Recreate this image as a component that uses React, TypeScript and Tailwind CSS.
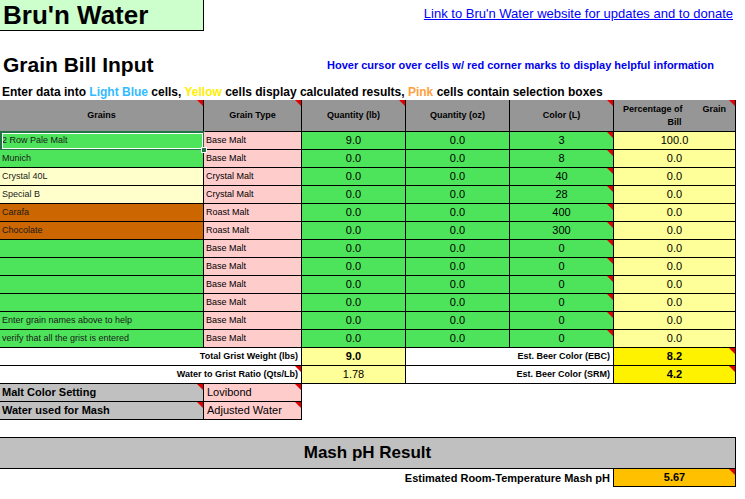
import React from 'react'

const GREEN = 'bg-[#4de35a]'
const PINK = 'bg-[#ffcccc]'
const LYEL = 'bg-[#ffffcc]'
const BROWN = 'bg-[#cc6600]'
const YCOL = 'bg-[#ffff99]'

type Row = { name: string; type: string; lb: string; color: string; pct: string; bg: string }

const rows: Row[] = [
  { name: '2 Row Pale Malt', type: 'Base Malt', lb: '9.0', color: '3', pct: '100.0', bg: GREEN },
  { name: 'Munich', type: 'Base Malt', lb: '0.0', color: '8', pct: '0.0', bg: GREEN },
  { name: 'Crystal 40L', type: 'Crystal Malt', lb: '0.0', color: '40', pct: '0.0', bg: LYEL },
  { name: 'Special B', type: 'Crystal Malt', lb: '0.0', color: '28', pct: '0.0', bg: LYEL },
  { name: 'Carafa', type: 'Roast Malt', lb: '0.0', color: '400', pct: '0.0', bg: BROWN },
  { name: 'Chocolate', type: 'Roast Malt', lb: '0.0', color: '300', pct: '0.0', bg: BROWN },
  { name: '', type: 'Base Malt', lb: '0.0', color: '0', pct: '0.0', bg: GREEN },
  { name: '', type: 'Base Malt', lb: '0.0', color: '0', pct: '0.0', bg: GREEN },
  { name: '', type: 'Base Malt', lb: '0.0', color: '0', pct: '0.0', bg: GREEN },
  { name: '', type: 'Base Malt', lb: '0.0', color: '0', pct: '0.0', bg: GREEN },
  { name: 'Enter grain names above to help', type: 'Base Malt', lb: '0.0', color: '0', pct: '0.0', bg: GREEN },
  { name: 'verify that all the grist is entered', type: 'Base Malt', lb: '0.0', color: '0', pct: '0.0', bg: GREEN },
]

function Mark() {
  return <span className="absolute top-0 right-0 w-0 h-0 border-t-[6px] border-l-[6px] border-t-[#e00000] border-l-transparent" />
}

function Cell({ className = '', mark, children }: { className?: string; mark?: boolean; children?: React.ReactNode }) {
  return (
    <div className={`relative h-full border-r border-b border-black flex items-center shrink-0 ${className}`}>
      {children}
      {mark && <Mark />}
    </div>
  )
}

export default function App() {
  return (
    <div className="w-[745px] h-[499px] bg-white text-black overflow-hidden" style={{ fontFamily: '"Liberation Sans", Arial, sans-serif' }}>
      {/* title bar */}
      <div className="flex h-[31px]">
        <div className="w-[204px] h-[31px] bg-[#ccffcc] border-r border-b border-black flex items-center pl-[3px]">
          <span className="text-[26px] font-bold leading-none">Bru'n Water</span>
        </div>
        <div className="flex-1 flex justify-end pr-[12px] pt-[6px]">
          <a href="#" className="text-[13px] leading-[16px] text-[#0000ff] underline">Link to Bru'n Water website for updates and to donate</a>
        </div>
      </div>

      <div className="h-[22px]" />
      <div className="flex items-center h-[24px]">
        <h1 className="w-[327px] pl-[3px] text-[21px] font-bold leading-[24px]">Grain Bill Input</h1>
        <span className="text-[11px] font-bold text-[#0000ee] leading-[14px]">Hover cursor over cells w/ red corner marks to display helpful information</span>
      </div>
      <div className="h-[23px] flex items-end">
        <p className="pl-[2px] text-[12px] font-bold leading-[16px] whitespace-nowrap">
          Enter data into <span className="text-[#33bbff]">Light Blue</span> cells, <span className="text-[#ffee00]">Yellow</span> cells display calculated results, <span className="text-[#ffa040]">Pink</span> cells contain selection boxes
        </p>
      </div>

      {/* header */}
      <div className="flex h-[32px] text-[9px] font-bold bg-[#969696] w-[736px]">
        <Cell className="w-[204px] justify-center" mark>Grains</Cell>
        <Cell className="w-[98px] justify-center" mark>Grain Type</Cell>
        <Cell className="w-[104px] justify-center" mark>Quantity (lb)</Cell>
        <Cell className="w-[104px] justify-center">Quantity (oz)</Cell>
        <Cell className="w-[104px] justify-center" mark>Color (L)</Cell>
        <Cell className="w-[122px] flex-col !items-stretch justify-center leading-[13px]" mark>
          <div className="flex justify-between pl-[9px] pr-[9px]"><span>Percentage of</span><span>Grain</span></div>
          <div className="text-center">Bill</div>
        </Cell>
      </div>

      {rows.map((r, i) => (
        <div key={i} className="flex h-[18px] text-[9px]">
          <Cell className={`w-[204px] pl-[2px] ${r.bg}`}>
            <span className="text-[#1a1a1a]">{r.name}</span>
            {i === 0 && (
              <>
                <span className="absolute left-0 -top-[1px] right-[-2px] bottom-[-2px] border-2 border-[#217346] shadow-[inset_0_0_0_1px_white]" />
                <span className="absolute right-[-4px] bottom-[-4px] w-[6px] h-[6px] bg-[#217346] border border-white z-10" />
              </>
            )}
          </Cell>
          <Cell className={`w-[98px] pl-[2px] ${PINK}`}>{r.type}</Cell>
          <Cell className={`w-[104px] justify-center text-[11px] ${GREEN}`}>{r.lb}</Cell>
          <Cell className={`w-[104px] justify-center text-[11px] ${GREEN}`}>0.0</Cell>
          <Cell className={`w-[104px] justify-center text-[11px] ${GREEN}`} mark>{r.color}</Cell>
          <Cell className={`w-[122px] justify-center text-[11px] ${YCOL}`}>{r.pct}</Cell>
        </div>
      ))}

      {/* totals */}
      <div className="flex h-[18px] text-[9px] font-bold">
        <Cell className="w-[302px] justify-end pr-[3px] bg-white">Total Grist Weight (lbs)</Cell>
        <Cell className={`w-[104px] justify-center text-[11px] ${YCOL}`}>9.0</Cell>
        <Cell className="w-[208px] justify-end pr-[3px] bg-white">Est. Beer Color (EBC)</Cell>
        <Cell className="w-[122px] justify-center text-[11px] bg-[#fff200]" mark>8.2</Cell>
      </div>
      <div className="flex h-[18px] text-[9px] font-bold">
        <Cell className="w-[302px] justify-end pr-[3px] bg-white" mark>Water to Grist Ratio (Qts/Lb)</Cell>
        <Cell className={`w-[104px] justify-center text-[11px] font-normal ${YCOL}`}>1.78</Cell>
        <Cell className="w-[208px] justify-end pr-[3px] bg-white">Est. Beer Color (SRM)</Cell>
        <Cell className="w-[122px] justify-center text-[11px] bg-[#fff200]" mark>4.2</Cell>
      </div>

      {/* settings */}
      <div className="flex h-[18px] text-[11px]">
        <Cell className="w-[204px] pl-[2px] bg-[#c0c0c0] font-bold" mark>Malt Color Setting</Cell>
        <Cell className={`w-[98px] pl-[3px] ${PINK}`} mark>Lovibond</Cell>
      </div>
      <div className="flex h-[18px] text-[11px]">
        <Cell className="w-[204px] pl-[2px] bg-[#c0c0c0] font-bold" mark>Water used for Mash</Cell>
        <Cell className={`w-[98px] pl-[3px] ${PINK}`} mark>Adjusted Water</Cell>
      </div>

      <div className="h-[17px]" />
      <div className="w-[736px] h-[32px] bg-[#c0c0c0] border-t border-b border-r border-black flex items-center justify-center">
        <span className="text-[17px] font-bold">Mash pH Result</span>
      </div>
      <div className="flex h-[18px]">
        <div className="w-[613px] h-full flex items-center justify-end pr-[3px] text-[11px] font-bold">Estimated Room-Temperature Mash pH</div>
        <div className="relative w-[123px] h-full border-l border-r border-b border-black bg-[#ffc000] flex items-center justify-center text-[11px] font-bold">
          5.67
          <Mark />
        </div>
      </div>
    </div>
  )
}
